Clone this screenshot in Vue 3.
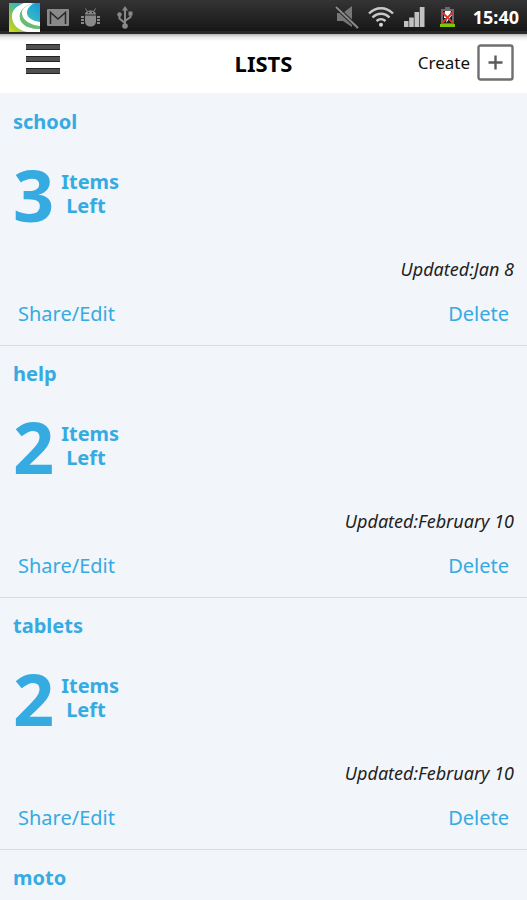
<script setup>
import { ref } from 'vue'

const lists = ref([
  { id: 1, name: 'school', left: 3, updated: 'Jan 8' },
  { id: 2, name: 'help', left: 2, updated: 'February 10' },
  { id: 3, name: 'tablets', left: 2, updated: 'February 10' },
  { id: 4, name: 'moto' }
])

function remove(id) {
  lists.value = lists.value.filter((list) => list.id !== id)
}
</script>

<template>
  <div class="screen">
    <div class="status">
      <div class="status-group left">
        <svg class="app-icon" width="31" height="29" viewBox="0 0 31 29" aria-hidden="true">
          <defs>
            <linearGradient id="leaf" x1="1" y1="0" x2="0" y2="1">
              <stop offset="0" stop-color="#1598e0" />
              <stop offset="0.4" stop-color="#35b8c0" />
              <stop offset="0.7" stop-color="#8cc63f" />
              <stop offset="1" stop-color="#d8dc18" />
            </linearGradient>
          </defs>
          <rect width="31" height="29" fill="url(#leaf)" />
          <path d="M24 0H15C7 3 2 8 3 15c1 8 8 13 16 14h12v-3C20 26 12 22 11 15 10 8 15 3 24 0z" fill="#fff" />
          <path d="M14 6c-3 3-4 6-3 9 1 7 9 11 20 11v-4C22 21 15 17 14 12z" fill="#67bd72" />
          <path d="M26 0C17 2 12 6 13 11c1 7 9 11 18 12v-4C24 18 18 15 18 10 18 6 21 2 26 0z" fill="#fff" />
        </svg>
        <svg class="mail" width="22" height="17" viewBox="0 0 22 17" aria-hidden="true">
          <rect width="22" height="17" rx="1" fill="#898989" />
          <path d="M3.500 15V3.500L11 10l7.500-6.500V15" fill="none" stroke="#292929" stroke-width="1.500" />
        </svg>
        <svg class="bug" width="19" height="19" viewBox="0 0 19 19" fill="#898989" aria-hidden="true">
          <path d="M4 6.500C4 1 15 1 15 6.500z" />
          <path d="M6 3L4.500 .5M13 3L14.500 .5" stroke="#898989" />
          <path d="M4 7.500h11v6c0 3-2.500 5-5.500 5s-5.500-2-5.500-5z" />
          <path d="M0 8h3v2H0zM0 11h3v2H0zM0 14h3v2H0zM16 8h3v2h-3zM16 11h3v2h-3zM16 14h3v2h-3z" />
          <circle cx="7.500" cy="4.500" r=".8" fill="#222" />
          <circle cx="11.500" cy="4.500" r=".8" fill="#222" />
        </svg>
        <svg class="usb" width="16" height="23" viewBox="0 0 16 23" fill="none" stroke="#898989" stroke-width="2" aria-hidden="true">
          <path d="M8 20V3M8 17L2.500 12.500V9M8 15l5.500-4V7" />
          <path d="M8 0l3 4.500H5z" fill="#898989" stroke="none" />
          <circle cx="8" cy="20" r="2.800" fill="#898989" stroke="none" />
          <circle cx="2.500" cy="8.500" r="2.200" fill="#898989" stroke="none" />
          <path d="M11.500 5.500h4v4h-4z" fill="#898989" stroke="none" />
        </svg>
      </div>
      <div class="status-group right">
        <svg width="24" height="24" viewBox="0 0 24 24" aria-hidden="true">
          <path d="M2 8h6l9-7v21l-9-6H2z" fill="#777" />
          <path d="M1 2l22 21" stroke="#222" stroke-width="4" />
          <path d="M1 2l22 21" stroke="#898989" stroke-width="2" />
        </svg>
        <svg class="wifi" width="26" height="20" viewBox="0 0 26 20" fill="none" stroke="#c9c9c9" stroke-width="2.400" aria-hidden="true">
          <path d="M1 6.500C8-.5 18-.5 25 6.500M4.500 10.500c5-5 12-5 17 0M8.500 14c3-2.500 6-2.500 9 0" />
          <circle cx="13" cy="17.800" r="2" fill="#d8d8d8" stroke="none" />
        </svg>
        <svg class="signal" width="21" height="20" viewBox="0 0 21 20" fill="#c2c2c2" aria-hidden="true">
          <path d="M0 14h4.500v6H0zM5.200 10.500h4.600V20H5.200zM10.500 5h4.600v15h-4.600zM15.800 0h4.700v20h-4.700z" />
        </svg>
        <svg class="battery" width="15" height="20" viewBox="0 0 15 20" aria-hidden="true">
          <path d="M5 0h5v2h4v18H1V2h4z" fill="#6b6b6b" />
          <path d="M3 4h9v12H3z" fill="#1b1b1b" />
          <path d="M0 17h15v3H0z" fill="#83c600" />
          <path d="M5 4h6l-1 4h2l-6 8 1-5H4z" fill="#fff" />
          <path d="M2 5l11 11M13 5L2 16" stroke="#e5352b" stroke-width="1.800" />
        </svg>
        <time class="clock">15:40</time>
      </div>
    </div>

    <header class="bar">
      <button class="menu" type="button" aria-label="Menu">
        <span></span><span></span><span></span>
      </button>
      <h1>LISTS</h1>
      <button class="create" type="button">
        Create
        <svg width="37" height="37" viewBox="0 0 37 37" fill="none" stroke="#6f6f6f" aria-hidden="true">
          <rect x="1.500" y="1.500" width="34" height="34" rx="2" stroke-width="2.400" />
          <path d="M11.500 18.500h14M18.500 11.500v14" stroke="#5c5c5c" stroke-width="2.400" />
        </svg>
      </button>
    </header>

    <main class="lists">
      <article v-for="list in lists" :key="list.id" class="card">
        <h2>{{ list.name }}</h2>
        <template v-if="list.left">
          <div class="count">
            <strong>{{ list.left }}</strong>
            <div class="unit">
              <span>Items</span>
              <span class="second">Left</span>
            </div>
          </div>
          <p class="updated">Updated:{{ list.updated }}</p>
          <div class="actions">
            <a href="#">Share/Edit</a>
            <button type="button" @click="remove(list.id)">Delete</button>
          </div>
        </template>
      </article>
    </main>
  </div>
</template>

<style>
body {
  margin: 0;
  background: #f2f5fa;
}
</style>

<style scoped>
.screen {
  display: flex;
  flex-direction: column;
  height: 100vh;
  overflow: hidden;
  background: #f2f5fa;
  color: #111;
  font-family: "Noto Sans", "Open Sans", sans-serif;
}

button {
  padding: 0;
  border: 0;
  background: none;
  color: inherit;
  font: inherit;
  cursor: pointer;
}

svg {
  display: block;
  flex: none;
}

.status {
  display: flex;
  flex: none;
  justify-content: space-between;
  box-sizing: border-box;
  height: 34px;
  padding: 0 8px 0 9px;
  border-bottom: 3px solid #2a2a2a;
  background: linear-gradient(#343434, #171717);
}

.status-group {
  display: flex;
  align-items: center;
  height: 34px;
}

.app-icon {
  margin-right: 7px;
}

.mail {
  margin-right: 12px;
}

.bug {
  margin-right: 17px;
}

.wifi {
  margin: 0 10px 0 9px;
}

.battery {
  margin: 0 18px 0 15px;
}

.clock {
  color: #fff;
  font-size: 18px;
  font-weight: 700;
  line-height: 24px;
}

.bar {
  display: grid;
  flex: none;
  grid-template-columns: 1fr auto 1fr;
  align-items: center;
  box-sizing: border-box;
  height: 59px;
  padding: 0 13px 2px 26px;
  background: linear-gradient(#b4b4b4, #e8e8e8 3px, #fff 7px);
}

.menu {
  display: flex;
  flex-direction: column;
  justify-self: start;
  gap: 6px;
  padding-bottom: 8px;
}

.menu span {
  box-sizing: border-box;
  width: 34px;
  height: 6px;
  border: solid #222;
  border-width: 1px 0;
  background: #505050;
}

h1 {
  margin: 0 13px 0 0;
  color: #000;
  font-size: 22px;
  line-height: 30px;
}

.create {
  display: flex;
  align-items: center;
  justify-self: end;
  gap: 7px;
  font-size: 17px;
}

.lists {
  flex: 1;
  min-height: 0;
  padding-top: 1px;
  overflow-y: auto;
  scrollbar-width: none;
}

.card {
  padding: 15px 13px 17px;
  border-bottom: 1px solid #d9dce1;
  color: #35abe2;
}

h2 {
  margin: 0;
  font-size: 20px;
  line-height: 26px;
}

.count {
  display: flex;
  align-items: center;
  gap: 7px;
  margin-top: 19px;
  font-weight: 700;
}

.count strong {
  font-size: 72px;
  font-weight: 700;
  line-height: 80px;
}

.unit {
  display: grid;
  font-size: 20px;
  line-height: 24px;
}

.second {
  padding-left: 5px;
}

.updated {
  margin: 23px 0 19px;
  color: #222;
  font-size: 18px;
  font-style: italic;
  line-height: 24px;
  text-align: right;
}

.actions {
  display: flex;
  justify-content: space-between;
  padding: 0 5px;
  font-size: 20px;
  line-height: 28px;
}

.actions a {
  color: inherit;
  text-decoration: none;
}
</style>
